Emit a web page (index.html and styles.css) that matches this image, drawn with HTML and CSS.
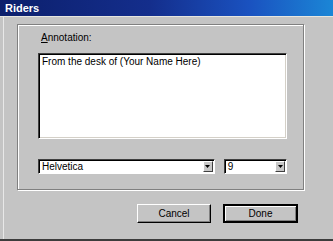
FILE: index.html
```html
<!doctype html>
<html>
<head>
    <meta charset="utf-8">
    <title>Riders</title>
    <link rel="stylesheet" href="styles.css">
</head>
<body class="dlg-body">
    <div class="dlg-window">
        <div class="dlg-title">Riders</div>

        <div class="dlg-content">
            <div class="dlg-group">
                <p class="dlg-label"><u>A</u>nnotation:</p>
                <div class="dlg-text">From the desk of (Your Name Here)</div>

                <div class="dlg-row">
                    <div class="dlg-select dlg-font">
                        <span class="dlg-value">Helvetica</span>
                        <span class="dlg-arrow">
                            <svg width="5" height="3" viewBox="0 0 5 3"><path d="M0 0h5L2.5 3z" fill="#000"/></svg>
                        </span>
                    </div>
                    <div class="dlg-select dlg-size">
                        <span class="dlg-value">9</span>
                        <span class="dlg-arrow">
                            <svg width="5" height="3" viewBox="0 0 5 3"><path d="M0 0h5L2.5 3z" fill="#000"/></svg>
                        </span>
                    </div>
                </div>
            </div>

            <div class="dlg-buttons">
                <button class="dlg-btn">Cancel</button>
                <button class="dlg-btn dlg-default">Done</button>
            </div>
        </div>
    </div>
</body>
</html>
```

FILE: styles.css
```css
.dlg-body {
    margin: 0;
    background: #c4c4c4;
    font-family: "Liberation Sans", Arial, sans-serif;
    font-size: 10px;
    color: #000;
}

.dlg-window {
    width: 333px;
    height: 241px;
    box-sizing: border-box;
    background: #c4c4c4;
    border-bottom: 2px solid #3c3c3c;
    overflow: hidden;
}

.dlg-title {
    height: 16px;
    line-height: 16px;
    padding-left: 5px;
    background: linear-gradient(to right, #0c1f6c 0%, #142e8c 45%, #1a52c0 75%, #1b86d6 100%);
    color: #fff;
    font-weight: bold;
    font-size: 11px;
    border-bottom: 1px solid #e6e6e0;
}

.dlg-content {
    margin-left: 3px;
    border-left: 1px solid #e8e8e8;
    height: 222px;
    padding-top: 7px;
}

.dlg-group {
    margin-left: 13px;
    width: 287px;
    box-sizing: border-box;
    border: 1px solid #808080;
    box-shadow: 1px 1px 0 #fff, inset 1px 1px 0 #fff;
    padding: 7px 16px 15px 20px;
}

.dlg-label {
    margin: 0;
    height: 12px;
    line-height: 12px;
    padding-left: 3px;
}

.dlg-text {
    margin-top: 9px;
    height: 86px;
    box-sizing: border-box;
    background: #fff;
    border: 1px solid;
    border-color: #404040 #fff #fff #404040;
    box-shadow: inset 1px 1px 0 #000, inset -1px -1px 0 #d4d0c8;
    padding: 2px 3px;
    line-height: 12px;
}

.dlg-row {
    display: flex;
    gap: 9px;
    margin-top: 20px;
}

.dlg-select {
    display: flex;
    align-items: center;
    height: 15px;
    box-sizing: border-box;
    background: #fff;
    border: 1px solid;
    border-color: #404040 #fff #fff #404040;
    box-shadow: inset 1px 1px 0 #000;
    padding: 1px 1px 1px 3px;
}

.dlg-font {
    width: 179px;
}

.dlg-size {
    width: 64px;
}

.dlg-value {
    flex: 1;
    line-height: 12px;
}

.dlg-arrow {
    width: 10px;
    height: 11px;
    box-sizing: border-box;
    display: flex;
    align-items: center;
    justify-content: center;
    background: #c8c8c8;
    border: 1px solid;
    border-color: #fff #404040 #404040 #fff;
}

.dlg-buttons {
    display: flex;
    justify-content: flex-end;
    gap: 12px;
    margin-top: 14px;
    margin-right: 35px;
}

.dlg-btn {
    width: 74px;
    height: 19px;
    box-sizing: border-box;
    background: #c4c4c4;
    border: 1px solid;
    border-color: #fff #000 #000 #fff;
    box-shadow: inset -1px -1px 0 #808080;
    font-family: "Liberation Sans", Arial, sans-serif;
    font-size: 10px;
    padding: 0;
    color: #000;
}

.dlg-default {
    width: 75px;
    border: 2px solid #000;
    box-shadow: inset 1px 1px 0 #fff, inset -1px -1px 0 #808080;
}
```
